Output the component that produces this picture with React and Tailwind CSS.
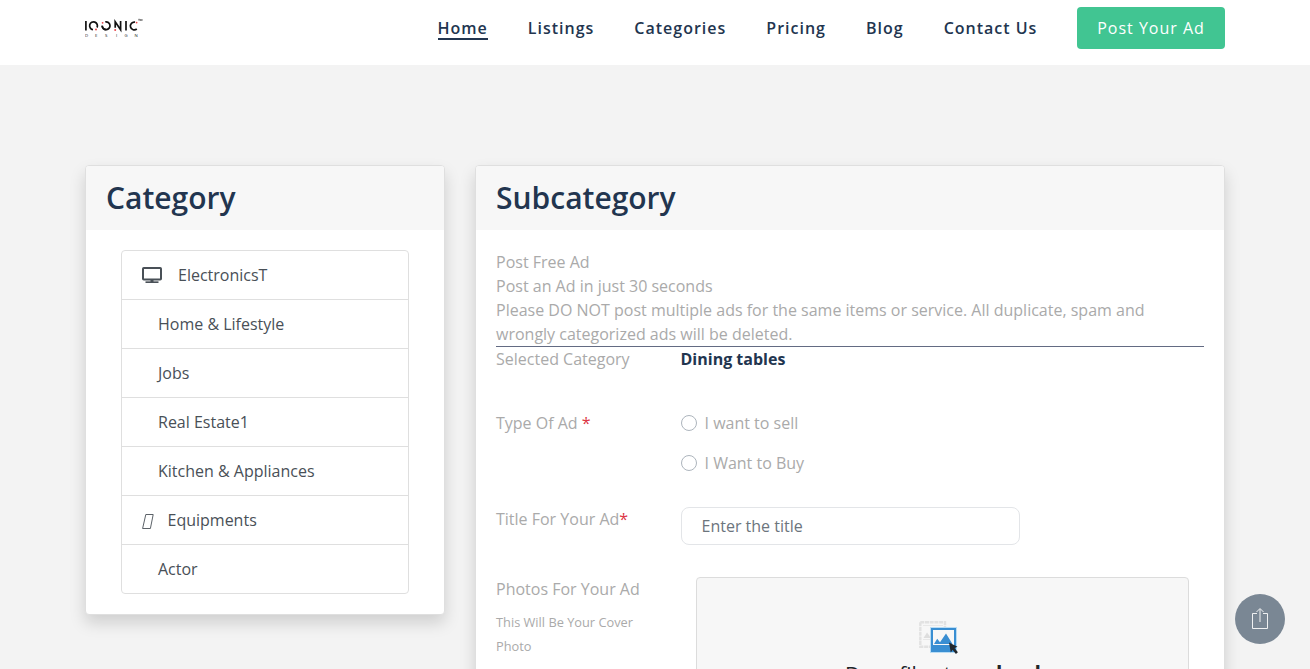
import React from "react";

const navItems = ["Home", "Listings", "Categories", "Pricing", "Blog", "Contact Us"];

const categories = [
  { label: "ElectronicsT", icon: "monitor" },
  { label: "Home & Lifestyle" },
  { label: "Jobs" },
  { label: "Real Estate1" },
  { label: "Kitchen & Appliances" },
  { label: "Equipments", icon: "missing" },
  { label: "Actor" },
];

function Logo() {
  return (
    <svg width="60" height="22" viewBox="0 0 60 22" fill="none" aria-label="Iqonic Design">
      <g stroke="#111" strokeWidth="1.7">
        <path d="M.9 4v9.6" />
        <path d="M8 12.6A3.9 3.9 0 1 1 12 10.5" />
        <path d="M20.3 4.9A3.9 3.9 0 1 1 17.2 8.8" />
        <path d="M17.2 8.8A3.9 3.9 0 0 0 21.1 12.7" />
        <path d="M30.2 10.8V4.8l5.4 8V4" />
        <path d="M41 4v9.6" />
        <path d="M50 5.2A3.9 3.9 0 1 0 51.8 12" />
      </g>
      <g fill="#e8454a">
        <circle cx="11" cy="12.5" r="1" />
        <circle cx="17.6" cy="5.8" r=".9" />
        <circle cx="30.2" cy="13" r="1" />
        <circle cx="51.6" cy="5.6" r=".9" />
      </g>
      <path d="M53.3 2.3h1.6M54.1 2.3V4M55.6 4V2.3l.7 1 .7-1V4" stroke="#333" strokeWidth=".6" />
      <text y="20" fill="#222" fontSize="4.3" fontFamily="Open Sans, sans-serif" x="0 10 20 31 39.5 49.5">DESIGN</text>
    </svg>
  );
}

function MonitorIcon() {
  return (
    <svg width="20" height="16" viewBox="0 0 20 16" className="mr-4" fill="none" stroke="#495057">
      <rect x="1" y="1" width="18" height="11.5" rx=".8" strokeWidth="2" />
      <path d="M10 12v3" strokeWidth="3" />
      <path d="M3.5 15.2h13" strokeWidth="1.7" />
    </svg>
  );
}

function MissingGlyph() {
  return (
    <svg width="12" height="15" viewBox="0 0 12 15" className="mr-[13.5px] mt-[3px]" fill="none" stroke="#495057">
      <path d="M3.8.5h7.4L8.4 14.5H.6z" strokeWidth=".9" />
    </svg>
  );
}

function UploadImageIcon() {
  return (
    <svg width="40" height="34" viewBox="0 0 40 34" fill="none">
      <path d="M1.3 1.3H26v5M1.3 1.3v24.4H11" stroke="#e2e2e2" strokeWidth="2.4" strokeDasharray="4 .7" />
      <path d="M4 4.5h20M4 18.5h7" stroke="#e8e8e8" strokeWidth="1" />
      <path d="M4.5 17 8 11.5l3 4V17z" fill="#dedede" />
      <rect x="11" y="6" width="27" height="26" fill="#b9dcf4" />
      <rect x="12" y="7" width="25" height="24" fill="#398ed2" />
      <rect x="14" y="9" width="21" height="15" fill="#f7f7f7" />
      <path d="m15 23 3.2-5.2 2.8 3.4 6-8.6L33.5 23z" fill="#398ed2" />
      <path d="m30 21.5 8.5 4.3-3 1.2 3.4 4.3-2 1.7-3.3-4.3-1.8 2.7z" fill="#22272c" />
    </svg>
  );
}

function Card({ title, className, children }) {
  return (
    <section className={`overflow-hidden rounded border border-[#dfdfdf] bg-white shadow-[0_8px_16px_rgba(0,0,0,0.15)] ${className}`}>
      <header className="h-16 bg-[#f7f7f7] px-5 pt-[14px]">
        <h2 className="text-[30px] font-semibold leading-9 text-[#22354f]">{title}</h2>
      </header>
      {children}
    </section>
  );
}

export default function App() {
  return (
    <div className="relative h-[669px] w-[1310px] overflow-hidden bg-[#f3f3f3] font-['Open_Sans',sans-serif] text-base leading-6 text-[#aaa]">
      <header className="h-[65px] bg-white px-[85px] pt-[7px]">
        <div className="flex items-start justify-between">
          <div className="pt-[10px]"><Logo /></div>
          <div className="flex h-[42px] items-center">
            <nav className="flex items-start gap-10 text-base font-semibold tracking-[1px] text-[#22354f]">
              {navItems.map((item, i) => (
                <a key={item} className={i === 0 ? "h-6 border-b-2 border-[#22354f]" : "h-6"}>{item}</a>
              ))}
            </nav>
            <button className="ml-[39.6px] h-[42px] w-[148px] rounded bg-[#41c592] text-base tracking-[1px] text-white">Post Your Ad</button>
          </div>
        </div>
      </header>

      <main className="flex items-start gap-[30px] px-[85px] pt-[100px]">
        <Card title="Category" className="h-[450px] w-[360px] shrink-0">
          <ul className="mx-[35px] mt-5 rounded border border-[#dfdfdf] text-[#495057]">
            {categories.map((c) => (
              <li key={c.label} className={`flex h-[49px] items-center border-b border-[#dfdfdf] last:h-12 last:border-b-0 ${c.icon ? "pl-5" : "pl-9"}`}>
                {c.icon === "monitor" && <MonitorIcon />}
                {c.icon === "missing" && <MissingGlyph />}
                <span>{c.label}</span>
              </li>
            ))}
          </ul>
        </Card>

        <Card title="Subcategory" className="h-[700px] w-[750px] shrink-0">
          <div className="px-5 pt-5">
            <div className="border-b border-[#636b83]">
              <p>Post Free Ad</p>
              <p>Post an Ad in just 30 seconds</p>
              <p>Please DO NOT post multiple ads for the same items or service. All duplicate, spam and wrongly categorized ads will be deleted.</p>
            </div>
            <div className="flex">
              <span className="w-[184.5px]">Selected Category</span>
              <b className="font-bold text-[#22354f]">Dining tables</b>
            </div>
            <div className="mt-10 flex">
              <span className="w-[184.5px]">Type Of Ad <span className="text-[#dc3545]">*</span></span>
              <div className="flex flex-col gap-4">
                {["I want to sell", "I Want to Buy"].map((t) => (
                  <label key={t} className="flex items-center gap-2">
                    <span className="size-4 rounded-full border border-[#adb5bd] bg-white" />
                    {t}
                  </label>
                ))}
              </div>
            </div>
            <div className="mt-8 flex">
              <span className="w-[184.5px]">Title For Your Ad<span className="text-[#dc3545]">*</span></span>
              <input placeholder="Enter the title" className="h-[38px] w-[339px] rounded-lg border border-[#e3e5e8] px-5 placeholder:text-[#6c757d]" />
            </div>
            <div className="mt-8 flex">
              <div className="w-[199.5px]">
                <p>Photos For Your Ad</p>
                <p className="mt-[9px] w-[150px] text-[12.8px] leading-6">This Will Be Your Cover Photo</p>
              </div>
              <div className="flex h-[200px] w-[493px] flex-col items-center rounded border border-[#dcdcdc] bg-[#f7f7f7] pl-px pt-[43px]">
                <div className="-ml-[7px]"><UploadImageIcon /></div>
                <p className="ml-px mt-[3px] text-[20.8px] leading-[30px] text-[#212529]">Drop files to <b>upload</b></p>
              </div>
            </div>
          </div>
        </Card>
      </main>

      <button aria-label="Share" className="absolute left-[1235px] top-[594px] flex size-[50px] items-center justify-center rounded-full bg-[#7a8794]">
        <svg width="18" height="24" viewBox="0 0 18 24" fill="none" stroke="#f0f1f2">
          <path d="M6 6.5H1.5v15h15v-15H12M9 15V2M5.5 5 9 1.5 12.5 5" />
        </svg>
      </button>
    </div>
  );
}
